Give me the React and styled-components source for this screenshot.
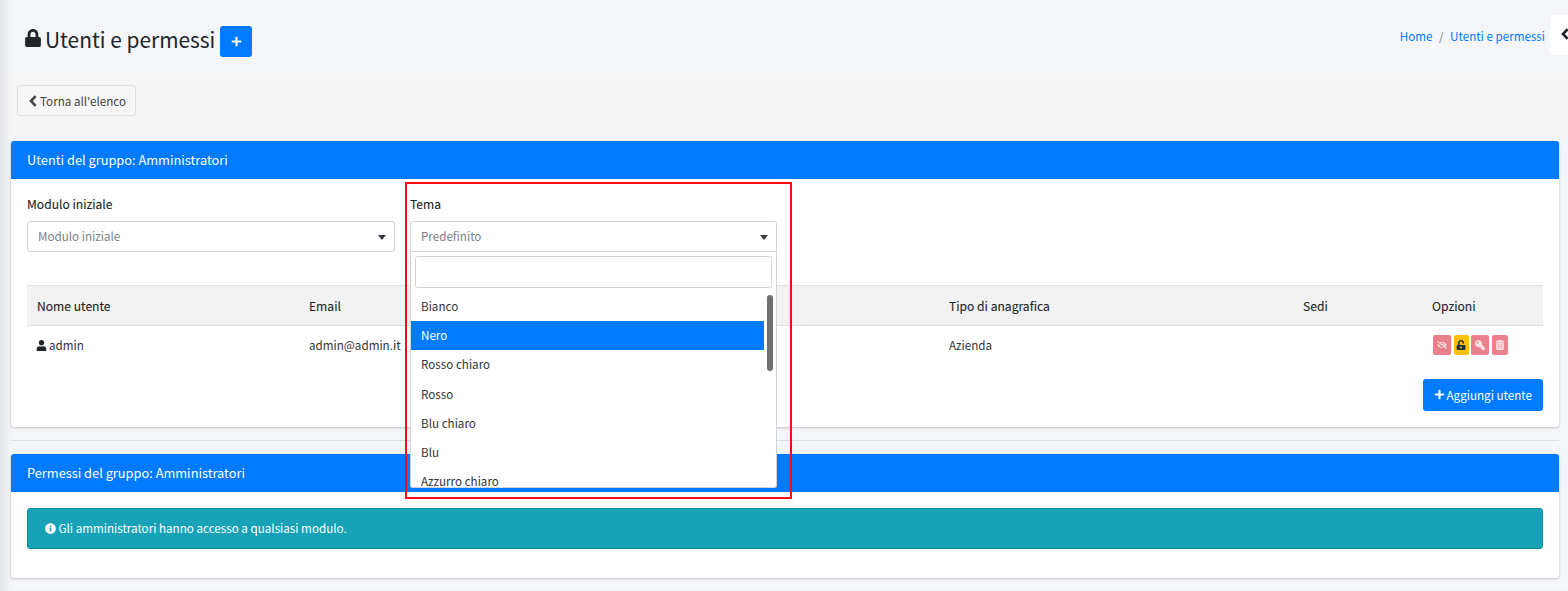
import React from 'react';
import styled, { createGlobalStyle } from 'styled-components';
import { FaLock, FaPlus, FaUser, FaInfoCircle, FaEyeSlash, FaUnlockAlt, FaKey, FaTrashAlt } from 'react-icons/fa';

const GlobalStyle = createGlobalStyle`
  html, body {
    margin: 0;
    padding: 0;
    height: 100%;
    overflow: hidden;
  }
  body {
    background: #f4f6f9;
    color: #212529;
    font-family: "Noto Sans CJK SC", "Open Sans", sans-serif;
    font-size: 11.65px;
    line-height: 20px;
  }
  * { box-sizing: border-box; }
`;

const Page = styled.div`
  position: relative;
  width: 1568px;
  height: 591px;
  overflow: hidden;
  padding: 0 9px 0 11px;
  background: linear-gradient(#f4f6f9 0, #f4f6f9 75px, #f5f5f5 76px, #f5f5f5 135px, #f4f6f9 136px);
  box-shadow: inset 10px 0 10px -6px #dfe1e6;
`;

const Header = styled.div`
  display: flex;
  align-items: center;
  justify-content: space-between;
  height: 85px;
  padding: 0 14px 2px 14px;
`;

const Title = styled.h1`
  display: flex;
  align-items: flex-start;
  margin: 0;
  font-size: 20.9px;
  line-height: 26px;
  font-weight: 400;
  gap: 5px;
  > svg {
    font-size: 18px;
    margin: 3px -2px 0 -1px;
  }
`;

const AddButton = styled.button`
  display: inline-flex;
  align-items: center;
  justify-content: center;
  width: 32px;
  height: 31px;
  border: none;
  border-radius: 3px;
  background: #007bff;
  color: #fff;
  padding: 0;
  svg { font-size: 11px; }
`;

const Breadcrumb = styled.div`
  display: flex;
  gap: 6.5px;
  margin-bottom: 12px;
  color: #6c757d;
  a { color: #007bff; text-decoration: none; }
`;

const BackButton = styled.button`
  display: flex;
  align-items: center;
  gap: 3px;
  height: 31px;
  margin-left: 6px;
  padding: 0 9px 0 11px;
  background: #f6f6f7;
  border: 1px solid #dcdee1;
  border-radius: 3px;
  color: #444;
  font: inherit;
`;

const Card = styled.section`
  background: #fff;
  border-radius: 3px;
  box-shadow: 0 0 1px rgba(0, 0, 0, .13), 0 1px 3px rgba(0, 0, 0, .2);
  margin-top: ${p => p.$top || 0}px;
  overflow: hidden;
`;

const CardHead = styled.div`
  height: 38px;
  padding: 9px 16px;
  background: #007bff;
  color: #fff;
  font-size: 12.8px;
  line-height: 20px;
`;

const CardBody = styled.div`
  padding: 16px;
`;

const FormRow = styled.div`
  display: grid;
  grid-template-columns: 368px 367px;
  column-gap: 15px;
  margin-bottom: 33px;
`;

const Label = styled.div`
  font-size: 12.1px;
  font-weight: 400;
  -webkit-text-stroke: 0.12px #212529;
  height: 26px;
  line-height: 18px;
  color: #212529;
`;

const Select = styled.div`
  position: relative;
  display: flex;
  align-items: center;
  height: 31px;
  padding: 0 10px 2px;
  border: 1px solid #ced4da;
  border-radius: ${p => (p.$open ? '3px 3px 0 0' : '3px')};
  color: #7a8288;
  &::after {
    content: "";
    position: absolute;
    right: 8px;
    top: 13px;
    border-left: 4.5px solid transparent;
    border-right: 4.5px solid transparent;
    border-top: 5px solid #343a40;
  }
`;

const Table = styled.table`
  width: 100%;
  border-collapse: collapse;
  table-layout: fixed;
  color: #333;
`;

const Th = styled.th`
  height: 40px;
  padding: 0 10px;
  background: #f2f2f2;
  border-top: 1px solid #dee2e6;
  border-bottom: 1px solid #dee2e6;
  text-align: left;
  font-size: 12.1px;
  font-weight: 400;
  -webkit-text-stroke: 0.12px #212529;
  color: #212529;
`;

const Td = styled.td`
  height: 39px;
  padding: 0 10px;
  > svg {
    font-size: 11px;
    color: #212529;
    vertical-align: -1px;
    margin: 0 2px 0 -1px;
  }
`;

const Actions = styled.div`
  display: flex;
  gap: 2.5px;
  margin-left: 1px;
`;

const ActionButton = styled.span`
  display: flex;
  align-items: center;
  justify-content: center;
  width: ${p => p.$w}px;
  height: 20px;
  border-radius: 2px;
  background: ${p => (p.$warn ? '#ffc107' : '#ea808b')};
  svg {
    font-size: 10px;
    color: ${p => (p.$warn ? '#1f2d3d' : '#fbe3e6')};
    transform: ${p => (p.$flip ? 'scaleX(-1)' : 'none')};
  }
`;

const TableFooter = styled.div`
  display: flex;
  justify-content: flex-end;
  margin-top: 14px;
`;

const PrimaryButton = styled.button`
  display: flex;
  align-items: center;
  gap: 2px;
  height: 32px;
  padding: 0 11px;
  background: #007bff;
  border: none;
  border-radius: 3px;
  color: #fff;
  font: inherit;
  svg { font-size: 11px; }
`;

const Divider = styled.hr`
  margin: 13px 0 13px;
  border: none;
  border-top: 1px solid #dcdfe3;
`;

const Alert = styled.div`
  display: flex;
  align-items: center;
  gap: 2.5px;
  height: 41px;
  margin-bottom: 13px;
  padding: 0 17px;
  background: #17a2b8;
  border: 1px solid #148ea1;
  border-radius: 3px;
  color: #fff;
  svg { font-size: 11px; }
`;

const Dropdown = styled.div`
  position: absolute;
  left: 410px;
  top: 252px;
  width: 367px;
  height: 236px;
  background: #fff;
  border: 1px solid #ced4da;
  border-top: none;
  border-radius: 0 0 3px 3px;
  overflow: hidden;
`;

const SearchBox = styled.div`
  height: 32px;
  margin: 4px 4px 4px;
  border: 1px solid #ced4da;
  border-radius: 3px;
`;

const Option = styled.div`
  height: 29.2px;
  width: 353px;
  padding: 0 10px;
  line-height: 28px;
  color: ${p => (p.$active ? '#fff' : '#333')};
  background: ${p => (p.$active ? '#007bff' : 'transparent')};
`;

const ScrollThumb = styled.div`
  position: absolute;
  left: 356px;
  top: 43px;
  width: 6px;
  height: 76px;
  border-radius: 3px;
  background: #6f6f6f;
`;

const Highlight = styled.div`
  position: absolute;
  left: 405px;
  top: 182px;
  width: 387px;
  height: 317px;
  border: 2px solid #fd0a16;
  pointer-events: none;
`;

const SideToggle = styled.div`
  position: absolute;
  right: 0;
  top: 15px;
  width: 18px;
  height: 40px;
  display: flex;
  align-items: center;
  padding: 0 0 2px 11px;
  overflow: hidden;
  background: #fff;
  border-radius: 4px 0 0 4px;
  color: #212529;
  svg { flex: none; }
`;

// the package chevron is too thin at this size
const Chevron = () => (
  <svg width="8" height="12" viewBox="0 0 8 12">
    <path d="M6.6 1.2 L2 6 L6.6 10.8" fill="none" stroke="currentColor" strokeWidth="2.6" />
  </svg>
);

const themes = ['Bianco', 'Nero', 'Rosso chiaro', 'Rosso', 'Blu chiaro', 'Blu', 'Azzurro chiaro'];

export default function App() {
  return (
    <Page>
      <GlobalStyle />
      <Header>
        <Title>
          <FaLock />
          Utenti e permessi
          <AddButton><FaPlus /></AddButton>
        </Title>
        <Breadcrumb>
          <a>Home</a>
          <span>/</span>
          <a>Utenti e permessi</a>
        </Breadcrumb>
      </Header>
      <BackButton><Chevron />Torna all'elenco</BackButton>

      <Card $top={25}>
        <CardHead>Utenti del gruppo: Amministratori</CardHead>
        <CardBody>
          <FormRow>
            <div>
              <Label>Modulo iniziale</Label>
              <Select>Modulo iniziale</Select>
            </div>
            <div>
              <Label>Tema</Label>
              <Select $open>Predefinito</Select>
            </div>
          </FormRow>
          <Table>
            <colgroup>
              <col style={{ width: 272 }} />
              <col style={{ width: 640 }} />
              <col style={{ width: 354 }} />
              <col style={{ width: 129 }} />
              <col style={{ width: 121 }} />
            </colgroup>
            <thead>
              <tr>
                <Th>Nome utente</Th>
                <Th>Email</Th>
                <Th>Tipo di anagrafica</Th>
                <Th>Sedi</Th>
                <Th>Opzioni</Th>
              </tr>
            </thead>
            <tbody>
              <tr>
                <Td><FaUser />admin</Td>
                <Td>admin@admin.it</Td>
                <Td>Azienda</Td>
                <Td />
                <Td>
                  <Actions>
                    <ActionButton $w={18}><FaEyeSlash /></ActionButton>
                    <ActionButton $w={15} $warn><FaUnlockAlt /></ActionButton>
                    <ActionButton $w={18} $flip><FaKey /></ActionButton>
                    <ActionButton $w={16}><FaTrashAlt /></ActionButton>
                  </Actions>
                </Td>
              </tr>
            </tbody>
          </Table>
          <TableFooter>
            <PrimaryButton><FaPlus />Aggiungi utente</PrimaryButton>
          </TableFooter>
        </CardBody>
      </Card>

      <Divider />

      <Card>
        <CardHead>Permessi del gruppo: Amministratori</CardHead>
        <CardBody>
          <Alert><FaInfoCircle />Gli amministratori hanno accesso a qualsiasi modulo.</Alert>
        </CardBody>
      </Card>

      <Dropdown>
        <SearchBox />
        {themes.map((name, i) => (
          <Option key={name} $active={i === 1}>{name}</Option>
        ))}
        <ScrollThumb />
      </Dropdown>
      <Highlight />
      <SideToggle><Chevron /></SideToggle>
    </Page>
  );
}
